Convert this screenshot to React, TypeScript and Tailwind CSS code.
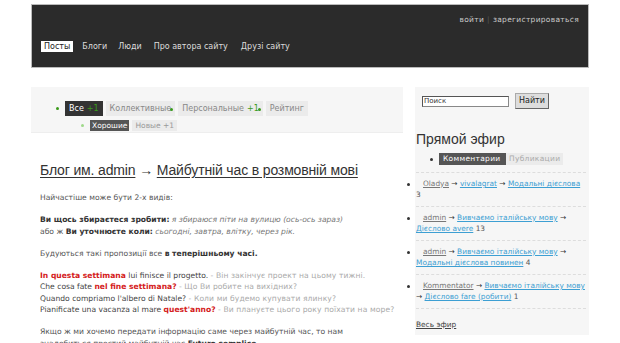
import React from "react";

const TABS = [
  { label: "Все", count: "+1", active: true },
  { label: "Коллективные", count: "", active: false },
  { label: "Персональные", count: "+1", active: false },
  { label: "Рейтинг", count: "", active: false },
];

const FEED = [
  { author: "Oladya", blog: "vivalagrat", topic: "Модальні дієслова", n: "3" },
  { author: "admin", blog: "Вивчаємо італійську мову", topic: "Дієслово avere", n: "13" },
  { author: "admin", blog: "Вивчаємо італійську мову", topic: "Модальні дієслова повинен", n: "4" },
  { author: "Kommentator", blog: "Вивчаємо італійську мову", topic: "Дієслово fare (робити)", n: "1" },
];

const Dot = ({ light }: { light?: boolean }) => (
  <span className={`inline-block w-[3px] h-[3px] rounded-full ${light ? "bg-[#9fd98a]" : "bg-[#3a9a1a]"}`} />
);

export default function App() {
  return (
    <div className="w-[620px] h-[343px] overflow-hidden bg-white font-['DejaVu_Sans',sans-serif] text-[7.6px] text-[#555]">
      <div className="w-[558px] mx-auto pt-[4px]">
        {/* HEADER */}
        <div className="h-[64px] bg-[#2b2b2b] border border-[#bbb] flex flex-col">
          <div className="flex justify-end pr-[9px] pt-[10px] text-[7.5px] text-[#ccc] tracking-[0.3px] leading-[10px]">
            <span>войти</span>
            <span className="mx-[3px] text-[#555]">|</span>
            <span>зарегистрироваться</span>
          </div>
          <div className="flex items-center gap-[9px] pl-[9px] mt-[16px] text-[#ddd] text-[8px] leading-[11px]">
            <span className="bg-white text-[#222] px-[3px]">Посты</span>
            <span>Блоги</span>
            <span className="ml-[2px]">Люди</span>
            <span className="ml-[3px]">Про автора сайту</span>
            <span className="ml-[4px]">Друзі сайту</span>
          </div>
        </div>

        <div className="flex gap-[12px] mt-[19px]">
          {/* MAIN */}
          <div className="w-[372px]">
            <div className="h-[46px] bg-[#f6f6f6] border-b border-[#eee] pt-[14px] pl-[25px] text-[8px]">
              <div className="flex items-center h-[15px]">
                <Dot />
                {TABS.map((t, i) => (
                  <React.Fragment key={t.label}>
                    <span
                      className={`h-[15px] flex items-center px-[4px] ${i === 0 ? "ml-[6px]" : "ml-[3px]"} ${
                        t.active ? "bg-[#333] text-white" : "bg-[#ebebeb] text-[#888]"
                      }`}
                    >
                      {t.label}
                      {t.count && <span className="text-[#3a9a1a] ml-[3px]">{t.count}</span>}
                    </span>
                    {(i === 1 || i === 2) && <span className="-ml-[5px] mr-[2px]"><Dot /></span>}
                  </React.Fragment>
                ))}
              </div>
              <div className="flex items-center h-[11px] mt-[4px] pl-[25px] text-[7.5px]">
                <Dot light />
                <span className="ml-[6px] h-[11px] flex items-center px-[2px] bg-[#555] text-white">Хорошие</span>
                <span className="ml-[3px] h-[11px] flex items-center px-[3px] bg-[#ebebeb] text-[#999]">Новые +1</span>
              </div>
            </div>

            <div className="pl-[9px] pr-[2px]">
              <h1 className="mt-[28px] font-['Liberation_Sans',Arial,sans-serif] text-[14px] tracking-[-0.15px] leading-[18px] text-[#333]">
                <span className="underline underline-offset-2">Блог им. admin</span> →{" "}
                <span className="underline underline-offset-2">Майбутній час в розмовній мові</span>
              </h1>

              <div className="mt-[13px] leading-[11.3px] flex flex-col gap-[11px]">
                <p>Найчастіше може бути 2-х видів:</p>
                <p>
                  <b className="text-[#333]">Ви щось збираєтеся зробити:</b>{" "}
                  <i className="text-[#777]">я збираюся піти на вулицю (ось-ось зараз)</i>
                  <br />
                  або ж <b className="text-[#333]">Ви уточнюєте коли:</b>{" "}
                  <i className="text-[#777]">сьогодні, завтра, влітку, через рік.</i>
                </p>
                <p>
                  Будуються такі пропозиції все <b className="text-[#333]">в теперішньому часі.</b>
                </p>
                <p className="text-[#444] whitespace-nowrap">
                  <b className="text-[#d42020]">In questa settimana</b> lui finisce il progetto.{" "}
                  <span className="text-[#aaa] tracking-[0.1px]">- Він закінчує проект на цьому тижні.</span>
                  <br />
                  Che cosa fate <b className="text-[#d42020]">nel fine settimana?</b>{" "}
                  <span className="text-[#aaa] tracking-[0.1px]">- Що Ви робите на вихідних?</span>
                  <br />
                  Quando compriamo l'albero di Natale?{" "}
                  <span className="text-[#aaa] tracking-[0.1px]">- Коли ми будемо купувати ялинку?</span>
                  <br />
                  Pianificate una vacanza al mare <b className="text-[#d42020]">quest'anno?</b>{" "}
                  <span className="text-[#aaa] tracking-[0.1px]">- Ви плануєте цього року поїхати на море?</span>
                </p>
                <p className="pr-[20px]">
                  Якщо ж ми хочемо передати інформацію саме через майбутній час, то нам знадобиться простий
                  майбутній час <b className="text-[#333]">Futuro semplice</b>.
                </p>
              </div>
            </div>
          </div>

          {/* SIDEBAR */}
          <div className="w-[174px] h-[248px] bg-[#f6f6f6] pl-[1px] pr-[3px] text-[7.4px]">
            <div className="flex items-center pt-[6px] pl-[6px]">
              <input
                readOnly
                value="Поиск"
                className="w-[87px] h-[11px] bg-white border border-[#888] border-t-[#555] border-l-[#555] text-[7px] text-[#333] px-[1px] leading-[9px] outline-none"
              />
              <button className="ml-[6px] h-[16px] w-[34px] bg-[#ddd] border border-[#aaa] border-r-[#666] border-b-[#666] text-[8px] text-[#222]">
                Найти
              </button>
            </div>

            <h2 className="mt-[22px] font-['Liberation_Sans',Arial,sans-serif] text-[14px] leading-[16px] text-[#333]">
              Прямой эфир
            </h2>

            <div className="flex items-center mt-[6px] h-[12px] text-[7.5px] tracking-[0.3px]">
              <span className="ml-[14px] mr-[6px] w-[3px] h-[3px] rounded-full bg-[#333]" />
              <span className="h-[12px] flex items-center px-[4px] bg-[#555] text-white w-[67px] overflow-hidden whitespace-nowrap">
                Комментарии
              </span>
              <span className="h-[12px] flex items-center px-[3px] bg-[#ebebeb] text-[#aaa]">Публикации</span>
            </div>

            <div className="mt-[7px] border-t border-dashed border-[#ddd]" />

            <ul className="leading-[11px]">
              {FEED.map((f, i) => (
                <li key={i} className="relative pt-[5px] pb-[6px] border-b border-dashed border-[#ddd]">
                  <span className="absolute -left-[9px] top-[10px] w-[3px] h-[3px] rounded-full bg-[#333]" />
                  <span className="ml-[7px] text-[#777] underline">{f.author}</span>{" "}
                  <span className="text-[#333]">→</span>{" "}
                  <span className="text-[#3d9fd3] underline">{f.blog}</span>{" "}
                  <span className="text-[#333]">→</span>{" "}
                  <span className="text-[#3d9fd3] underline">{f.topic}</span>{" "}
                  <span className="text-[#555]">{f.n}</span>
                </li>
              ))}
            </ul>

            <div className="mt-[10px] text-[#444] underline">Весь эфир</div>
          </div>
        </div>
      </div>
    </div>
  );
}
